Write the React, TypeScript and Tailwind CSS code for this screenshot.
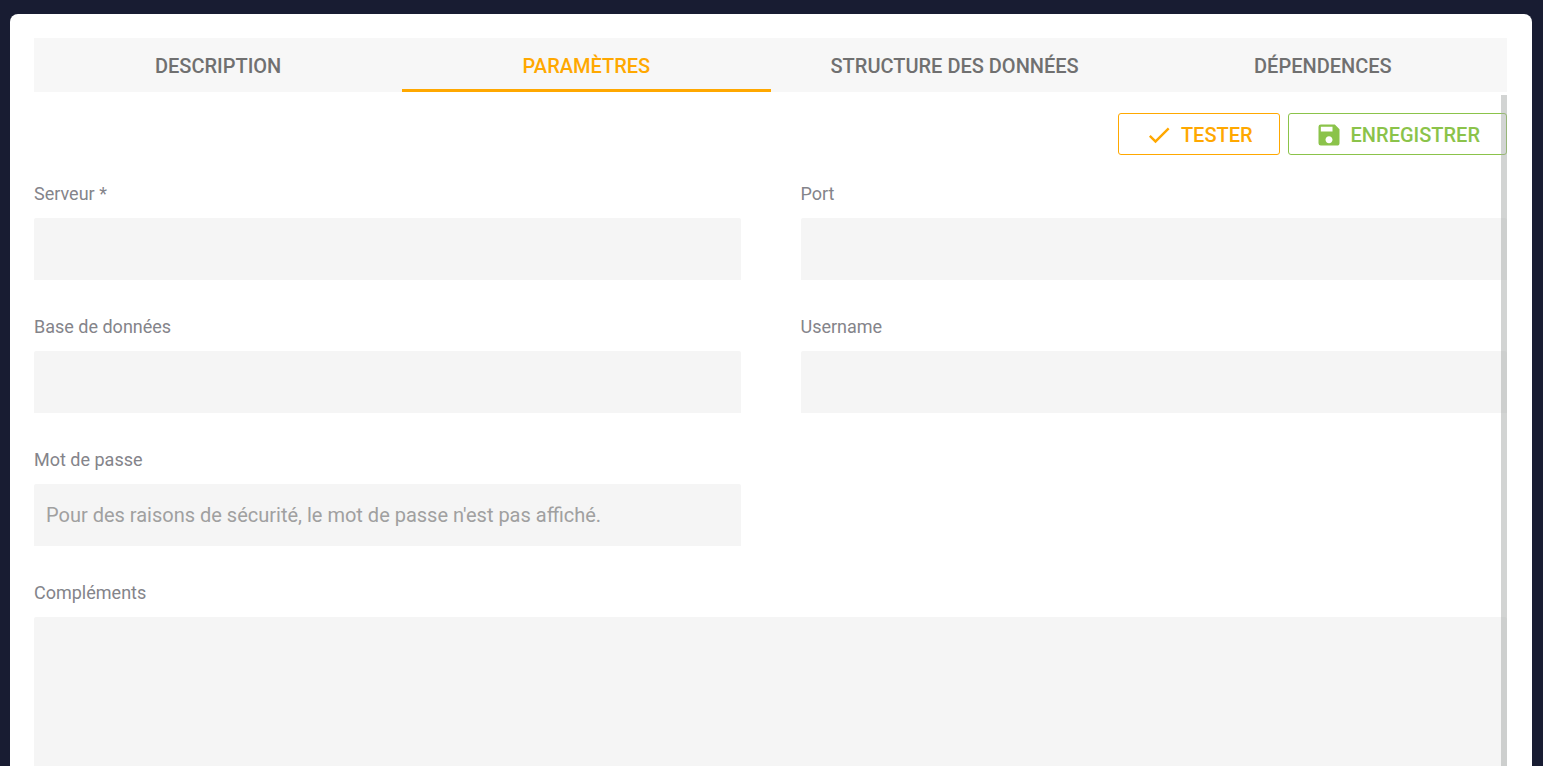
import { useState } from "react";
import type { ReactNode } from "react";
import { MdCheck, MdSave } from "react-icons/md";

const tabs = ["Description", "Paramètres", "Structure des données", "Dépendences"];

const fieldClass =
  "block w-full rounded-t-xs bg-[#f5f5f5] px-3 text-xl text-gray-800 outline-none placeholder:text-[#a0a0a0]";

const buttonClass =
  "flex h-[42px] items-center gap-2 rounded-[3px] border px-[26px] pt-0.5 text-xl font-medium uppercase";

type FieldProps = {
  id: string;
  label: string;
  type?: string;
  placeholder?: string;
};

function Label({ id, children }: { id: string; children: ReactNode }) {
  return (
    <label htmlFor={id} className="mb-3 block text-lg leading-6 text-[#84848a]">
      {children}
    </label>
  );
}

function Field({ id, label, type = "text", placeholder }: FieldProps) {
  return (
    <div>
      <Label id={id}>{label}</Label>
      <input id={id} type={type} placeholder={placeholder} className={`${fieldClass} h-[62px]`} />
    </div>
  );
}

export default function App() {
  const [active, setActive] = useState("Paramètres");

  return (
    <div className="flex h-screen flex-col overflow-hidden bg-[#181c32] pt-[14px] pr-[11px] pl-[10px] font-['Roboto',sans-serif]">
      <main className="flex min-h-0 flex-1 flex-col rounded-t-lg bg-white pt-6 pr-[25px] pl-6">
        <div role="tablist" className="grid shrink-0 grid-cols-4 bg-[#f7f7f7]">
          {tabs.map((tab) => (
            <button
              key={tab}
              type="button"
              role="tab"
              aria-selected={tab === active}
              onClick={() => setActive(tab)}
              className={`h-[54px] border-b-3 pt-1 text-xl font-medium uppercase ${
                tab === active
                  ? "border-[#ffa800] text-[#ffa800]"
                  : "border-transparent text-[#707070]"
              }`}
            >
              {tab}
            </button>
          ))}
        </div>

        <div className="relative mt-[3px] min-h-0 flex-1 overflow-hidden">
          <form className="pt-[18px]" onSubmit={(e) => e.preventDefault()}>
            <div className="flex justify-end gap-2">
              <button type="button" className={`${buttonClass} border-[#ffa800] text-[#ffa800]`}>
                <MdCheck className="size-7" />
                Tester
              </button>
              <button type="submit" className={`${buttonClass} border-[#8bc34a] text-[#8bc34a]`}>
                <MdSave className="size-7" />
                Enregistrer
              </button>
            </div>

            <div className="mt-[27px] grid grid-cols-2 gap-x-[60px] gap-y-[35px]">
              <Field id="server" label="Serveur *" />
              <Field id="port" label="Port" />
              <Field id="database" label="Base de données" />
              <Field id="username" label="Username" />
              <Field
                id="password"
                label="Mot de passe"
                type="password"
                placeholder="Pour des raisons de sécurité, le mot de passe n'est pas affiché."
              />
              <div className="col-span-2">
                <Label id="extras">Compléments</Label>
                <textarea id="extras" rows={10} className={`${fieldClass} resize-none py-4`} />
              </div>
            </div>
          </form>
          <div className="absolute inset-y-0 right-0 w-[6px] bg-[#a5a9a7]/50" />
        </div>
      </main>
    </div>
  );
}
